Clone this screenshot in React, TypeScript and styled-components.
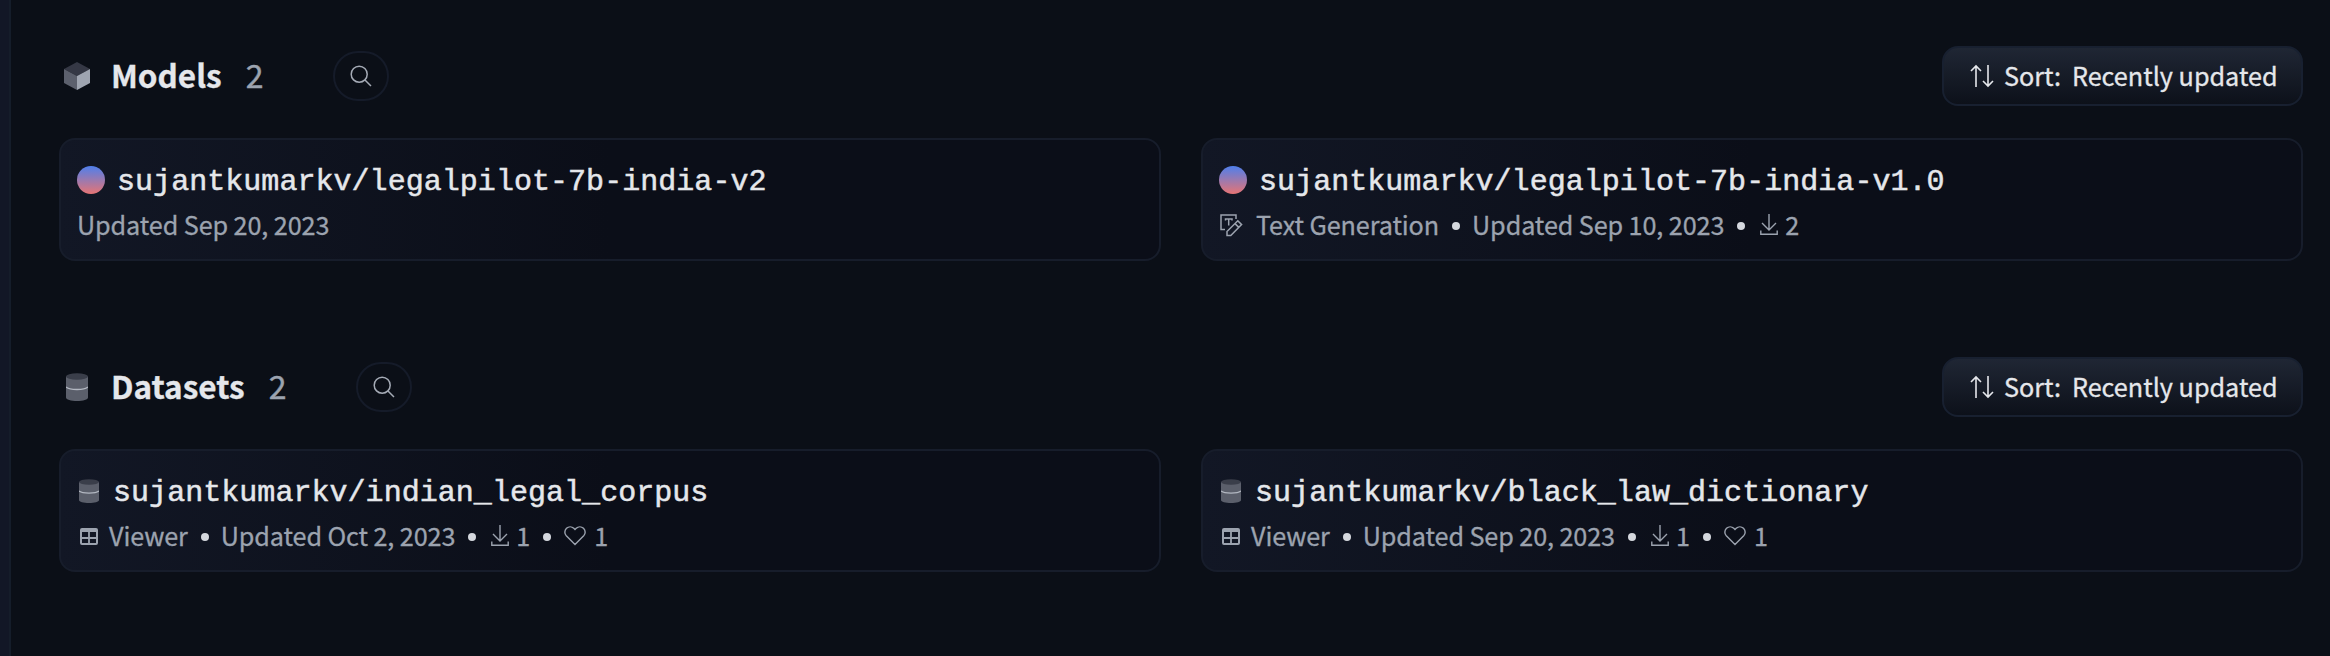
import React from "react";
import styled, { createGlobalStyle } from "styled-components";

const Global = createGlobalStyle`
  * { box-sizing: border-box; }
  body { margin: 0; background: #0b0f17; }
`;

const sans = `"Noto Sans CJK SC", "Open Sans", sans-serif`;
const mono = `"Liberation Mono", monospace`;

const Page = styled.div`
  display: flex;
  height: 656px;
  overflow: hidden;
  background: #0b0f17;
  font-family: ${sans};
`;

const SideEdge = styled.div`
  width: 11px;
  flex: none;
  background: #121726;
  border-right: 2px solid #151d2a;
`;

const Content = styled.main`
  flex: 1;
  display: flex;
  flex-direction: column;
  gap: 96px;
  padding: 46px 27px 0 48px;
`;

const Section = styled.section`
  display: flex;
  flex-direction: column;
  gap: 32px;
`;

const Header = styled.header`
  display: flex;
  align-items: center;
  height: 60px;
`;

const HeaderIcon = styled.span`
  display: flex;
  justify-content: center;
  width: 36px;
  margin-right: 16px;
`;

const Title = styled.h2`
  margin: 0;
  padding-bottom: 5px;
  font-size: 31.5px;
  line-height: 40px;
  font-weight: 700;
  color: #e5e7eb;
  -webkit-text-stroke: 0.3px #e5e7eb;
`;

const Count = styled.span`
  margin-left: 24px;
  padding-bottom: 5px;
  width: 18px;
  font-size: 32px;
  line-height: 40px;
  color: #9ca3af;
  -webkit-text-stroke: 0.4px #9ca3af;
`;

const SearchButton = styled.button`
  display: flex;
  align-items: center;
  justify-content: center;
  width: 56px;
  height: 50px;
  margin-left: 69px;
  padding: 0;
  border: 2px solid #151b29;
  border-radius: 25px;
  background: transparent;
  color: #a5abb6;
`;

const SortButton = styled.button`
  display: flex;
  align-items: center;
  width: 361px;
  height: 60px;
  margin-left: auto;
  padding: 0 0 0 26px;
  border: 2px solid #182030;
  border-radius: 16px;
  background: linear-gradient(to bottom, #202735, #0c1019);
  background-origin: border-box;
  color: #e5e7eb;
  font-family: ${sans};
  font-size: 25.2px;
  line-height: 36px;
  white-space: pre;
  -webkit-text-stroke: 0.3px #e5e7eb;
`;

const SortText = styled.span`
  padding-bottom: 2px;
`;

const SortLabel = styled(SortText)`
  margin: 0 11px 0 10px;
`;

const Cards = styled.div`
  display: grid;
  grid-template-columns: 1fr 1fr;
  gap: 40px;
`;

const Card = styled.article`
  height: 123px;
  padding: 20px 16px 0;
  border: 2px solid #171d2b;
  border-radius: 16px;
  background: linear-gradient(to right, #121725 0, #0b0e18 50%);
  background-origin: border-box;
`;

const NameRow = styled.h4`
  display: flex;
  align-items: center;
  height: 40px;
  margin: 0;
  font-weight: 400;
`;

const Avatar = styled.span`
  width: 28px;
  height: 28px;
  margin-right: 12px;
  border-radius: 50%;
  background: linear-gradient(to bottom, #4f7fec, #e67474);
`;

const RepoIcon = styled.span`
  display: flex;
  width: 24px;
  margin-right: 12px;
  justify-content: center;
`;

const Name = styled.span`
  padding-top: 4px;
  font-family: ${mono};
  font-size: 30px;
  line-height: 40px;
  letter-spacing: 0.04px;
  color: #e5e7eb;
  -webkit-text-stroke: 0.5px #e5e7eb;
`;

const Meta = styled.div`
  display: flex;
  align-items: center;
  height: 36px;
  margin-top: 6px;
  font-size: 25.2px;
  line-height: 36px;
  letter-spacing: -0.1px;
  color: #9ca3af;
  white-space: pre;
`;

const MetaText = styled.span`
  -webkit-text-stroke: 0.3px #9ca3af;
`;

const MetaIcon = styled.span<{ $w: number; $gap: number }>`
  display: flex;
  width: ${(p) => p.$w}px;
  margin-right: ${(p) => p.$gap}px;
  padding-top: 2px;
  justify-content: center;
`;

const Dot = styled.span`
  width: 8px;
  height: 8px;
  margin: 3px 12px 0 13px;
  border-radius: 50%;
  background: #d5d8de;
`;

const CubeIcon = () => (
  <svg width="28" height="30" viewBox="0 0 28 30">
    <path d="M14 1 27 8 14 15 1 8Z" fill="#353845" />
    <path d="M1 8 14 15V29L1 22Z" fill="#5c606d" />
    <path d="M27 8 14 15V29L27 22Z" fill="#9fa5b1" />
  </svg>
);

const DatabaseIcon = ({ w, h }: { w: number; h: number }) => (
  <svg width={w} height={h} viewBox="0 0 22 28" preserveAspectRatio="none">
    <path d="M0 3.5V24.5C0 26.6 5 28 11 28S22 26.6 22 24.5V3.5Z" fill="#5b5f6b" />
    <ellipse cx="11" cy="3.5" rx="11" ry="3.2" fill="#3a3e4a" />
    <path d="M0 14C2 16 6 16.5 11 16.5S20 16 22 14" fill="none" stroke="#b3b8c2" strokeWidth="1.3" />
  </svg>
);

const SearchIcon = () => (
  <svg width="22" height="22" viewBox="0 0 22 22" fill="none" stroke="currentColor" strokeWidth="1.5">
    <circle cx="9.2" cy="9.2" r="8" />
    <path d="m15 15 6 6" />
  </svg>
);

const SortIcon = () => (
  <svg width="24" height="24" viewBox="0 0 24 24" fill="none" stroke="currentColor" strokeWidth="1.6">
    <path d="M6 23V2M1 7 6 2 11 7M18 1v21M13 17l5 5 5-5" />
  </svg>
);

const DownloadIcon = () => (
  <svg width="20" height="24" viewBox="0 0 20 24" fill="none" stroke="currentColor" strokeWidth="1.4">
    <path d="M10 1v16M3 10l7 7 7-7M1.8 17.5v3.8h16.4v-3.8" />
  </svg>
);

const HeartIcon = () => (
  <svg width="22" height="20" viewBox="0 0 22 20" fill="none" stroke="currentColor" strokeWidth="1.4">
    <path d="M11 18.5 2.3 9.8C.3 7.7.4 4.4 2.5 2.3 4.6.3 7.8.4 9.8 2.3L11 3.5 12.2 2.3C14.2.4 17.4.3 19.5 2.3 21.6 4.4 21.7 7.7 19.7 9.8Z" />
  </svg>
);

const TableIcon = () => (
  <svg width="18" height="17" viewBox="0 0 18 17" fill="none" stroke="currentColor" strokeWidth="2">
    <rect x="1" y="1" width="16" height="15" rx="1" />
    <path d="M1 2.5h16" strokeWidth="3" />
    <path d="M9 4v12M1 10h16" strokeWidth="1.8" />
  </svg>
);

const TextGenerationIcon = () => (
  <svg width="24" height="24" viewBox="0 0 24 24" fill="none" stroke="currentColor" strokeWidth="1.5">
    <path d="M6 16.5H2V2H17V6" />
    <path d="M6.5 7.5V6h6.5v1.5M9.7 6v6.5" />
    <path d="M8 22.5V18.5L18.8 7.8 22.6 11.6 11.8 22.5ZM16 10.6l3.8 3.8" />
  </svg>
);

type MetaItem = { icon?: "text" | "table" | "download" | "heart"; text: string };
type Repo = { name: string; meta: MetaItem[] };
type Group = { title: string; kind: "model" | "dataset"; repos: Repo[] };

const metaIcons = {
  text: { node: <TextGenerationIcon />, w: 24, gap: 13 },
  table: { node: <TableIcon />, w: 24, gap: 8 },
  download: { node: <DownloadIcon />, w: 24, gap: 4 },
  heart: { node: <HeartIcon />, w: 24, gap: 7 },
};

const groups: Group[] = [
  {
    title: "Models",
    kind: "model",
    repos: [
      { name: "sujantkumarkv/legalpilot-7b-india-v2", meta: [{ text: "Updated Sep 20, 2023" }] },
      {
        name: "sujantkumarkv/legalpilot-7b-india-v1.0",
        meta: [
          { icon: "text", text: "Text Generation" },
          { text: "Updated Sep 10, 2023" },
          { icon: "download", text: "2" },
        ],
      },
    ],
  },
  {
    title: "Datasets",
    kind: "dataset",
    repos: [
      {
        name: "sujantkumarkv/indian_legal_corpus",
        meta: [
          { icon: "table", text: "Viewer" },
          { text: "Updated Oct 2, 2023" },
          { icon: "download", text: "1" },
          { icon: "heart", text: "1" },
        ],
      },
      {
        name: "sujantkumarkv/black_law_dictionary",
        meta: [
          { icon: "table", text: "Viewer" },
          { text: "Updated Sep 20, 2023" },
          { icon: "download", text: "1" },
          { icon: "heart", text: "1" },
        ],
      },
    ],
  },
];

const RepoCard = ({ repo, kind }: { repo: Repo; kind: Group["kind"] }) => (
  <Card>
    <NameRow>
      {kind === "model" ? (
        <Avatar />
      ) : (
        <RepoIcon>
          <DatabaseIcon w={20} h={24} />
        </RepoIcon>
      )}
      <Name>{repo.name}</Name>
    </NameRow>
    <Meta>
      {repo.meta.map((item, i) => {
        const icon = item.icon && metaIcons[item.icon];
        return (
          <React.Fragment key={i}>
            {i > 0 && <Dot />}
            {icon && (
              <MetaIcon $w={icon.w} $gap={icon.gap}>
                {icon.node}
              </MetaIcon>
            )}
            <MetaText>{item.text}</MetaText>
          </React.Fragment>
        );
      })}
    </Meta>
  </Card>
);

export default function App() {
  return (
    <Page>
      <Global />
      <SideEdge />
      <Content>
        {groups.map((g) => (
          <Section key={g.title}>
            <Header>
              <HeaderIcon>{g.kind === "model" ? <CubeIcon /> : <DatabaseIcon w={22} h={28} />}</HeaderIcon>
              <Title>{g.title}</Title>
              <Count>2</Count>
              <SearchButton aria-label="Search">
                <SearchIcon />
              </SearchButton>
              <SortButton>
                <SortIcon />
                <SortLabel>Sort:</SortLabel>
                <SortText>Recently updated</SortText>
              </SortButton>
            </Header>
            <Cards>
              {g.repos.map((r) => (
                <RepoCard key={r.name} repo={r} kind={g.kind} />
              ))}
            </Cards>
          </Section>
        ))}
      </Content>
    </Page>
  );
}
